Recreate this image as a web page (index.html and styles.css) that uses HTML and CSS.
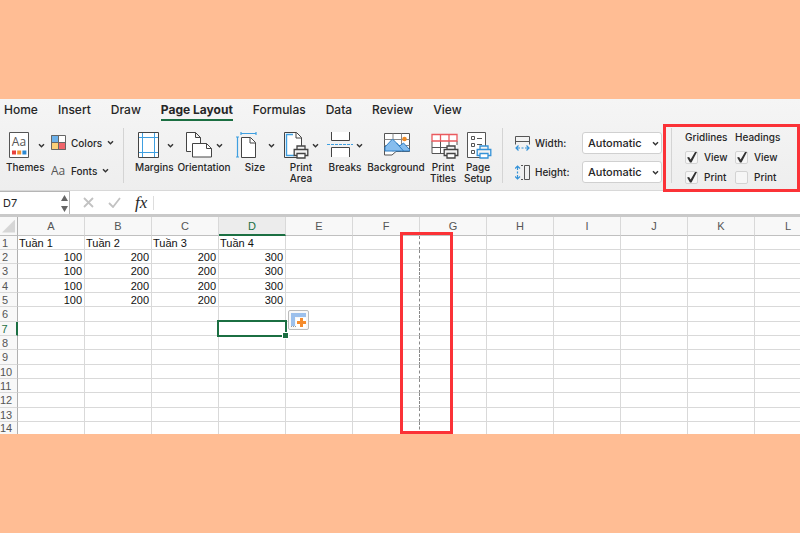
FILE: index.html
```html
<!DOCTYPE html>
<html lang="vi">
<head>
    <meta charset="UTF-8">
    <meta name="viewport" content="width=device-width, initial-scale=1.0">
    <title>Page Layout</title>
    <link rel="stylesheet" href="styles.css">
</head>
<body>
<svg class="defs" width="0" height="0">
    <symbol id="chevron" viewBox="0 0 7 7"><path d="M1 2.2l2.5 2.6L6 2.2" fill="none" stroke="#333" stroke-width="1.4"/></symbol>
    <symbol id="printer" viewBox="0 0 16 14">
        <path d="M4 4.5V1h8v3.5M4 10.5H1.2V4.5h13.6v6H12" fill="#f3f3f3" stroke="currentColor" stroke-width="1.3"/>
        <path d="M4 8.5h8V13H4z" fill="#fff" stroke="currentColor" stroke-width="1.3"/>
    </symbol>
</svg>

<main class="app">
    <header class="ribbon">
        <nav class="tabs">
            <a href="#">Home</a>
            <a href="#">Insert</a>
            <a href="#">Draw</a>
            <a href="#" class="active">Page Layout</a>
            <a href="#">Formulas</a>
            <a href="#">Data</a>
            <a href="#">Review</a>
            <a href="#">View</a>
        </nav>

        <div class="tools">
            <div class="group themes">
                <button class="tool start">
                    <span class="face">
                        <svg width="21" height="27" viewBox="0 0 21 27"><path d="M.5.5h19v25H.5z" fill="#fff" stroke="#555"/><path d="M3 18.5h4v4H3z" fill="#e8413c"/><path d="M8.2 18.5h4v4h-4z" fill="#f29233"/><path d="M13.4 18.5h4v4h-4z" fill="#2b88d0"/><text x="10" y="14" class="aa" text-anchor="middle">Aa</text></svg>
                        <svg class="chev"><use href="#chevron"/></svg>
                    </span>
                    <span>Themes</span>
                </button>
                <div class="stack">
                    <button class="mini">
                        <svg width="15" height="15" viewBox="0 0 15 15"><path d="M0 0h7.5v7.5H0z" fill="#6cb1ea"/><path d="M7.5 0H15v7.5H7.5z" fill="#fff"/><path d="M0 7.5h7.5V15H0z" fill="#f9cf78"/><path d="M7.5 7.5H15V15H7.5z" fill="#f0656b"/><path d="M.5.5h14v14H.5zM7.5 0v15M0 7.5h15" fill="none" stroke="#666"/></svg>
                        <span>Colors</span>
                        <svg class="chev"><use href="#chevron"/></svg>
                    </button>
                    <button class="mini">
                        <svg width="15" height="15" viewBox="0 0 15 15"><text x="7" y="12" class="aa" text-anchor="middle">Aa</text></svg>
                        <span>Fonts</span>
                        <svg class="chev"><use href="#chevron"/></svg>
                    </button>
                </div>
            </div>

            <div class="group page">
                <button class="tool start">
                    <span class="face">
                        <svg width="21" height="27" viewBox="0 0 21 27"><path d="M.5.5h20v25H.5z" fill="#fff"/><path d="M4.500 1v24M16.500 1v24M1 5.500h19M1 20.500h19" stroke="#3f9fe0"/><path d="M.5.5h20v25H.5z" fill="none" stroke="#444"/></svg>
                        <svg class="chev"><use href="#chevron"/></svg>
                    </span>
                    <span>Margins</span>
                </button>
                <button class="tool w50">
                    <span class="face">
                        <svg width="27" height="27" viewBox="0 0 27 27"><g fill="#fff" stroke="#444"><path d="M5 19.500H.5V.5h9l5 5V11M9.500.5v5h5"/><path d="M6.500 11.500h14l5 5v8.500h-19z"/><path d="M20.500 11.500v5h5" fill="none"/></g></svg>
                        <svg class="chev"><use href="#chevron"/></svg>
                    </span>
                    <span>Orientation</span>
                </button>
                <button class="tool w44">
                    <span class="face size">
                        <svg width="21" height="27" viewBox="0 0 21 27"><path d="M5 1.500h15M5 0v3M20 0v3M1.500 5v20M0 5h3M0 25h3" fill="none" stroke="#3f9fe0" stroke-width="1.200"/><path d="M5.500 5.500h9l5 5v15h-14z" fill="#fff" stroke="#444"/><path d="M14 5.500v5.500h5.500" fill="none" stroke="#444"/></svg>
                        <svg class="chev"><use href="#chevron"/></svg>
                    </span>
                    <span>Size</span>
                </button>
                <button class="tool">
                    <span class="face">
                        <svg width="25" height="27" viewBox="0 0 25 27"><path d="M.500.500h12l5 5v20H.500z" fill="#fff" stroke="#444"/><path d="M9 2.500H2.500v21H10" fill="none" stroke="#3f9fe0" stroke-width="1.400"/><path d="M12 .500v5.500h5.500" fill="none" stroke="#444"/><use href="#printer" x="9" y="13" width="16" height="14" color="#444"/></svg>
                        <svg class="chev"><use href="#chevron"/></svg>
                    </span>
                    <span>Print<br>Area</span>
                </button>
                <button class="tool">
                    <span class="face">
                        <svg width="26" height="27" viewBox="0 0 26 27"><path d="M4.500 0v8.500h18V0M4.500 25v-9.500h18V25" fill="#fff" stroke="#444"/><path d="M0 12.500h26" stroke="#3f9fe0" stroke-dasharray="3 1"/></svg>
                        <svg class="chev"><use href="#chevron"/></svg>
                    </span>
                    <span>Breaks</span>
                </button>
                <button class="tool w54">
                    <span class="face">
                        <svg width="27" height="27" viewBox="0 0 27 27"><path d="M.500 1.500h25v18H12l-4 3.500H.500z" fill="#fff" stroke="#555"/><path d="M9 1.500v18M17.500 1.500v18M.500 7.500h25M.500 13.500h25" stroke="#888"/><circle cx="20.500" cy="7" r="2.300" fill="#f08a24"/><path d="M1 19v-4l7.500-8 7 7 4-3 6 6.500V19z" fill="#86bdee" stroke="#2f7fc4"/><path d="M12.500 11l7 8" stroke="#2f7fc4"/></svg>
                    </span>
                    <span>Background</span>
                </button>
                <button class="tool w32">
                    <span class="face">
                        <svg width="28" height="27" viewBox="0 0 28 27"><path d="M1 9h25v13H1z" fill="#fff"/><path d="M1 9v12.500h12M1 15.500h18M9.500 9v12.500M18 9v6M26 9v4" fill="none" stroke="#555"/><path d="M1 2.500h25V9H1zM9.500 2.500V9M18 2.500V9" fill="#fff" stroke="#ea5a5e" stroke-width="1.300"/><use href="#printer" x="12" y="13" width="16" height="14" color="#444"/></svg>
                    </span>
                    <span>Print<br>Titles</span>
                </button>
                <button class="tool w30">
                    <span class="face">
                        <svg width="25" height="27" viewBox="0 0 25 27"><path d="M.500.500h18v25H.500z" fill="#fff" stroke="#555"/><path d="M4.500 4.500h3v3h-3zM4.500 11.500h3v3h-3zM4.500 18.500h3v3h-3zM10 6.500h5M10 12.500h5" fill="none" stroke="#555"/><use href="#printer" x="9" y="13" width="16" height="14" color="#3492d8"/></svg>
                    </span>
                    <span>Page<br>Setup</span>
                </button>
            </div>

            <div class="group scale">
                <div class="field">
                    <svg width="15" height="15" viewBox="0 0 15 15"><path d="M.500 8.500v-8h14v8M.500 5.500h14" fill="none" stroke="#555"/><path d="M1 12h4M10 12h4M6.500 12h2M3.500 9.500L1 12l2.500 2.500M11.500 9.500L14 12l-2.500 2.500" fill="none" stroke="#3492d8" stroke-width="1.200"/></svg>
                    <label for="width">Width:</label>
                    <span class="select">
                        <select id="width"><option>Automatic</option></select>
                        <svg class="chev"><use href="#chevron"/></svg>
                    </span>
                </div>
                <div class="field">
                    <svg width="15" height="15" viewBox="0 0 15 15"><path d="M9.500.500h5v14h-5zM8 .500H6M8 14.500H6" fill="none" stroke="#555"/><path d="M2.500 1v4M2.500 10v4M2.500 6.500v2M0 3.500L2.500 1 5 3.500M0 11.500L2.500 14 5 11.500" fill="none" stroke="#3492d8" stroke-width="1.200"/></svg>
                    <label for="height">Height:</label>
                    <span class="select">
                        <select id="height"><option>Automatic</option></select>
                        <svg class="chev"><use href="#chevron"/></svg>
                    </span>
                </div>
            </div>

            <div class="group options">
                <div class="checks">
                    <span>Gridlines</span>
                    <label><input type="checkbox" checked>View</label>
                    <label><input type="checkbox" checked>Print</label>
                </div>
                <div class="checks">
                    <span>Headings</span>
                    <label><input type="checkbox" checked>View</label>
                    <label><input type="checkbox">Print</label>
                </div>
            </div>
        </div>
        <div class="marker marker-options"></div>
    </header>

    <div class="formula-bar">
        <div class="name-box">
            <input type="text" value="D7" aria-label="Name box">
            <svg width="7" height="17" viewBox="0 0 7 17"><path d="M0 6l3.500-6L7 6zM0 11l3.500 6L7 11z" fill="#666"/></svg>
        </div>
        <button aria-label="Cancel"><svg width="11" height="11" viewBox="0 0 11 11"><path d="M1 1l9 9M10 1l-9 9" stroke="#c2c2c2" stroke-width="1.800"/></svg></button>
        <button aria-label="Enter"><svg width="13" height="11" viewBox="0 0 13 11"><path d="M1 6l4 4 7-9" fill="none" stroke="#c2c2c2" stroke-width="1.800"/></svg></button>
        <button class="fx">fx</button>
        <input type="text" class="formula" aria-label="Formula">
    </div>

    <div class="sheet">
        <table>
            <thead>
                <tr><th class="corner"></th><th>A</th><th>B</th><th>C</th><th class="current">D</th><th>E</th><th>F</th><th>G</th><th>H</th><th>I</th><th>J</th><th>K</th><th>L</th></tr>
            </thead>
            <tbody>
                <tr class="names"><th>1</th><td>Tuần 1</td><td>Tuần 2</td><td>Tuần 3</td><td>Tuần 4</td><td></td><td></td><td></td><td></td><td></td><td></td><td></td><td></td></tr>
                <tr><th>2</th><td>100</td><td>200</td><td>200</td><td>300</td><td></td><td></td><td></td><td></td><td></td><td></td><td></td><td></td></tr>
                <tr><th>3</th><td>100</td><td>200</td><td>200</td><td>300</td><td></td><td></td><td></td><td></td><td></td><td></td><td></td><td></td></tr>
                <tr><th>4</th><td>100</td><td>200</td><td>200</td><td>300</td><td></td><td></td><td></td><td></td><td></td><td></td><td></td><td></td></tr>
                <tr><th>5</th><td>100</td><td>200</td><td>200</td><td>300</td><td></td><td></td><td></td><td></td><td></td><td></td><td></td><td></td></tr>
                <tr><th>6</th><td></td><td></td><td></td><td></td><td></td><td></td><td></td><td></td><td></td><td></td><td></td><td></td></tr>
                <tr>
                    <th class="current">7</th><td></td><td></td><td></td>
                    <td class="selected">
                        <div class="selection"></div>
                        <button class="quick" aria-label="Quick analysis"><svg width="15" height="15" viewBox="0 0 15 15"><path d="M0 0h15v4H4v9H0z" fill="#9cc0ec"/><path d="M5 5h10v10H5z" fill="#fff"/><path d="M0 13.500h5" stroke="#999" stroke-dasharray="1 1"/><path d="M10.500 5v9M6 9.500h9" stroke="#f58b2c" stroke-width="3"/></svg></button>
                    </td>
                    <td></td><td></td><td></td><td></td><td></td><td></td><td></td><td></td>
                </tr>
                <tr><th>8</th><td></td><td></td><td></td><td></td><td></td><td></td><td></td><td></td><td></td><td></td><td></td><td></td></tr>
                <tr><th>9</th><td></td><td></td><td></td><td></td><td></td><td></td><td></td><td></td><td></td><td></td><td></td><td></td></tr>
                <tr><th>10</th><td></td><td></td><td></td><td></td><td></td><td></td><td></td><td></td><td></td><td></td><td></td><td></td></tr>
                <tr><th>11</th><td></td><td></td><td></td><td></td><td></td><td></td><td></td><td></td><td></td><td></td><td></td><td></td></tr>
                <tr><th>12</th><td></td><td></td><td></td><td></td><td></td><td></td><td></td><td></td><td></td><td></td><td></td><td></td></tr>
                <tr><th>13</th><td></td><td></td><td></td><td></td><td></td><td></td><td></td><td></td><td></td><td></td><td></td><td></td></tr>
                <tr><th>14</th><td></td><td></td><td></td><td></td><td></td><td></td><td></td><td></td><td></td><td></td><td></td><td></td></tr>
            </tbody>
        </table>
        <div class="marker marker-break"></div>
    </div>
</main>
</body>
</html>
```
FILE: styles.css
```css
* {
    box-sizing: border-box;
}

body {
    margin: 0;
    min-height: 100vh;
    display: flex;
    flex-direction: column;
    justify-content: center;
    background: #ffbd94;
    font-family: Inter, 'Liberation Sans', sans-serif;
    font-size: 10px;
    font-weight: 500;
    color: #262626;
    overflow-x: hidden;
}

button, input, select {
    font: inherit;
    color: inherit;
    background: none;
    border: 0;
    padding: 0;
    margin: 0;
}

svg {
    display: block;
    flex: none;
}

.defs {
    position: absolute;
}

.app {
    width: 100%;
    background: #fff;
}

/* ribbon */
.ribbon {
    position: relative;
    background: linear-gradient(#f5f5f5, #eeeeee);
    border-bottom: 1px solid #d8d8d8;
    padding-bottom: 7px;
}

.tabs {
    display: flex;
    gap: 20px;
    padding: 3px 4px 0;
    margin-bottom: 7px;
    font-size: 12px;
}

.tabs a {
    height: 19px;
    line-height: 15px;
    color: #262626;
    text-decoration: none;
    white-space: nowrap;
}

.tabs .active {
    font-weight: 700;
    border-bottom: 2px solid #1b6f42;
}

.tools {
    display: flex;
    height: 55px;
}

.group {
    display: flex;
    flex: none;
    border-right: 1px solid #d4d4d4;
}

.themes {
    gap: 8px;
    width: 124px;
    padding-left: 6px;
}

.page {
    gap: 4px;
    width: 379px;
    padding-left: 11px;
}

.tool {
    width: 40px;
    flex: none;
    display: flex;
    flex-direction: column;
    align-items: center;
    gap: 3px;
    padding-top: 3px;
    line-height: 11px;
    white-space: nowrap;
}

.themes .tool {
    width: 37px;
}

.tool.w30 { width: 30px; }
.tool.w32 { width: 32px; }
.tool.w44 { width: 44px; }
.tool.w50 { width: 50px; }
.tool.w54 { width: 54px; }

.face {
    flex: none;
    display: flex;
    align-items: center;
    gap: 6px;
    height: 28px;
}

.face svg:first-child {
    margin-right: -3px;
}

.start {
    align-items: flex-start;
}

.start .face {
    padding-left: 3px;
    gap: 11px;
}

.face.size {
    gap: 14px;
}

.chev {
    width: 7px;
    height: 7px;
}

.aa {
    font: 400 12px 'Open Sans', sans-serif;
    fill: #555;
}

.stack {
    display: flex;
    flex-direction: column;
    gap: 13px;
    padding-top: 7px;
}

.mini {
    display: flex;
    align-items: center;
    gap: 5px;
    height: 15px;
}

.scale {
    flex-direction: column;
    gap: 7px;
    width: 169px;
    padding: 4px 0 0 12px;
}

.field {
    display: flex;
    align-items: center;
    height: 22px;
}

.field label {
    width: 52px;
    padding-left: 5px;
}

.select {
    position: relative;
    width: 80px;
}

.select select {
    appearance: none;
    display: block;
    width: 100%;
    height: 22px;
    padding-left: 5px;
    font-size: 11px;
    background: #fff;
    border: 1px solid #d0d0d0;
    border-radius: 3px;
}

.select .chev {
    position: absolute;
    right: 3px;
    top: 8px;
    pointer-events: none;
}

.options {
    gap: 10px;
    padding: 3px 0 0 13px;
    border-right: 0;
}

.checks {
    display: flex;
    flex-direction: column;
    gap: 7px;
    width: 40px;
    line-height: 13px;
    white-space: nowrap;
}

.checks label {
    display: flex;
    align-items: center;
    gap: 6px;
    height: 13px;
}

.checks input {
    appearance: none;
    flex: none;
    width: 13px;
    height: 13px;
    background: #f6f6f6;
    border: 1px solid #d3d3d3;
    border-radius: 2px;
}

.checks input:checked::before {
    content: '';
    display: block;
    width: 11px;
    height: 11px;
    background: #333;
    clip-path: polygon(10% 50%, 28% 45%, 42% 68%, 82% 0, 100% 0, 50% 95%, 36% 95%);
}

/* formula bar */
.formula-bar {
    display: flex;
    align-items: center;
    height: 26px;
    border-bottom: 3px solid #c9c9c9;
}

.name-box {
    display: flex;
    align-items: center;
    justify-content: space-between;
    width: 70px;
    height: 23px;
    margin-right: 13px;
    padding: 0 1px 0 3px;
    border: solid #b5b5b5;
    border-width: 1px 1px 0 0;
}

.name-box input {
    width: 50px;
    font-size: 11px;
    font-weight: 400;
}

.formula-bar button {
    margin-right: 14px;
}

.formula-bar .fx {
    margin-right: 6px;
    font: italic 17px/20px 'Liberation Serif', serif;
}

.formula {
    flex: 1;
    height: 14px;
    border-left: 1px solid #ddd;
}

/* sheet */
.sheet {
    position: relative;
    overflow: hidden;
    font-family: 'Liberation Sans', Arial, sans-serif;
    font-size: 11px;
    font-weight: 400;
}

table {
    table-layout: fixed;
    width: 822px;
    border-spacing: 0;
}

th, td {
    width: 67px;
    padding: 0;
    border: solid #d9d9d9;
    border-width: 0 1px 1px 0;
    line-height: 12px;
}

th {
    font-weight: 400;
    color: #555;
    background: #f8f8f8;
}

thead th {
    height: 19px;
    border-bottom-color: #c0c0c0;
}

thead .current {
    color: #1b6f42;
    background: #ececec;
    border-bottom: 2px solid #1b6f42;
}

.corner {
    width: 18px;
    border-right-color: #b0b0b0;
}

.corner::before {
    content: '';
    display: block;
    width: 13px;
    height: 13px;
    margin-left: 2px;
    background: #d6d6d6;
    clip-path: polygon(100% 0, 100% 100%, 0 100%);
}

tbody tr {
    height: 14px;
    color: #111;
}

tbody tr:nth-child(3n) {
    height: 15px;
}

tbody tr:last-child {
    height: 12px;
}

tbody tr:last-child > * {
    border-bottom: 0;
}

tbody th {
    padding-right: 7px;
    border-right-color: #b0b0b0;
}

tbody .current {
    color: #1b6f42;
    border-right: 2px solid #1b6f42;
}

td {
    text-align: right;
    padding-right: 2px;
}

.names td {
    text-align: left;
    padding-left: 1px;
}

/* page break after column F */
td:nth-child(7) {
    border-right: 1px dashed #888;
}

.selected {
    position: relative;
}

.selection {
    position: absolute;
    inset: -2px;
    border: 2px solid #1b6f42;
}

.selection::after {
    content: '';
    position: absolute;
    right: -3px;
    bottom: -3px;
    width: 5px;
    height: 5px;
    background: #1b6f42;
    outline: 1px solid #fff;
}

.quick {
    position: absolute;
    left: 69px;
    top: -12px;
    z-index: 1;
    width: 21px;
    height: 20px;
    padding: 2px;
    background: #f8f8f8;
    border: 1px solid #bbb;
    border-radius: 2px;
}

/* highlight frames */
.marker {
    position: absolute;
    z-index: 2;
    border: 3px solid #fb3237;
    pointer-events: none;
}

.marker-options {
    left: 663px;
    right: 0;
    top: 25px;
    bottom: -2px;
}

.marker-break {
    left: 400px;
    width: 53px;
    top: 15px;
    bottom: 0;
}
```
